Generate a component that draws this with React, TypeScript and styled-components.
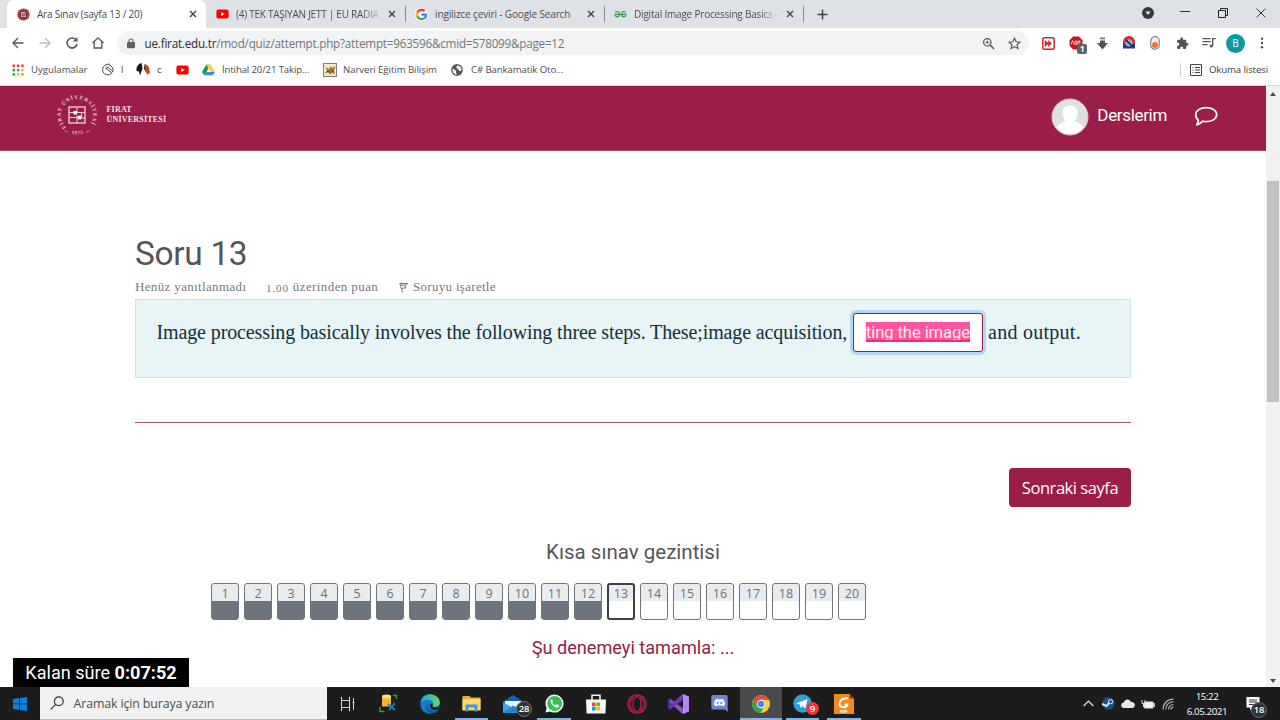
import React from "react";
import styled, { createGlobalStyle, css } from "styled-components";

const MAROON = "#9a1e47";
const UI = `"Open Sans", "Noto Sans", sans-serif`;
const SERIF = `"Liberation Serif", serif`;

const Global = createGlobalStyle`
  * { box-sizing: border-box; }
  body { margin: 0; background: #fff; overflow: hidden; }
  svg { display: block; flex: none; }
`;

const Screen = styled.div`
  width: 1280px; height: 720px; display: flex; flex-direction: column;
  font-family: ${UI}; overflow: hidden; background: #fff; white-space: nowrap;
`;

/* ---------- browser chrome ---------- */
const TabStrip = styled.div`
  height: 28px; flex: none; background: #dee1e6; display: flex; padding-left: 7px;
`;
const Tab = styled.div<{ $active?: boolean; $line?: boolean }>`
  width: 199px; height: 28px; padding: 0 3px 0 10px; display: flex; align-items: center;
  position: relative; color: #4b4e52;
  ${p => p.$active && css`background: #fff; border-radius: 7px 7px 0 0; color: #45484c;`}
  ${p => p.$line && css`&::after { content: ""; position: absolute; right: -1px; top: 6px; width: 1px; height: 16px; background: #85888c; }`}
`;
const Favicon = styled.span`
  width: 20px; flex: none; display: flex;
`;
const TabTitle = styled.span<{ $ls?: number; $fade?: boolean }>`
  width: 146px; overflow: hidden; font-size: 10px; line-height: 16px;
  letter-spacing: ${p => p.$ls ?? 0}px;
  ${p => p.$fade && css`mask-image: linear-gradient(90deg, #000 86%, transparent 100%);`}
`;
const TabClose = styled.span`
  flex: 1; display: flex; justify-content: center;
`;
const NewTab = styled.span`
  width: 38px; display: flex; align-items: center; justify-content: center;
`;
const WindowButtons = styled.div`
  margin-left: auto; display: flex; align-items: center; height: 26px;
`;
const WinSlot = styled.span<{ $w: number }>`
  width: ${p => p.$w}px; display: flex; justify-content: center;
`;
const Toolbar = styled.div`
  height: 31px; flex: none; display: flex; align-items: center; padding: 0 4px 1px 5px; background: #fff;
`;
const ToolSlot = styled.span`
  width: 26.65px; flex: none; display: flex; justify-content: center; position: relative;
`;
const Omnibox = styled.div`
  width: 912px; height: 24px; margin: 0 6.500px 0 5.500px; border-radius: 12px; background: #f1f3f4;
  display: flex; align-items: center; padding: 0 1px 0 10px;
`;
const Url = styled.span`
  flex: 1; margin-left: 9.500px; font-size: 11.7px; line-height: 16px; color: #72767a; letter-spacing: -0.23px;
  b { font-weight: 400; color: #2b2d30; }
`;
const ExtBadge = styled.span`
  position: absolute; left: 15px; top: 8px; width: 10px; height: 10px; border-radius: 2px;
  background: #5f6368; color: #fff; font: 700 8px/10px "Open Sans", sans-serif; text-align: center;
`;
const Avatar = styled.span`
  width: 19px; height: 19px; border-radius: 50%; background: #0d98a5; color: #fff;
  font-size: 10px; line-height: 19px; text-align: center;
`;
const BookmarkBar = styled.div`
  height: 27px; flex: none; display: flex; align-items: center; padding: 0 0 5px 12px;
  border-bottom: 1px solid #eccdd7; 
`;
const Bookmark = styled.span<{ $w: number; $gap?: number; $ls?: number }>`
  width: ${p => p.$w}px; flex: none; display: flex; align-items: center; gap: ${p => p.$gap ?? 7}px;
  font-size: 9.6px; line-height: 14px; letter-spacing: ${p => p.$ls ?? 0}px; color: #4b4e52;
`;
const ReadingList = styled.span`
  margin-left: auto; width: 100px; height: 14px; border-left: 1px solid #cfd1d4; padding-left: 9px;
  display: flex; align-items: center; gap: 7px; font-size: 9.6px; letter-spacing: -0.1px; color: #3c4043;
`;

/* ---------- page ---------- */
const Viewport = styled.div`
  flex: 1; min-height: 0; display: flex;
`;
const Page = styled.main`
  width: 1266px; position: relative; display: flex; flex-direction: column;
`;
const SiteHeader = styled.header`
  height: 65px; flex: none; background: ${MAROON}; border-bottom: 1px solid #a84e6c; display: flex;
  align-items: center; padding: 0 48px 6px 55px; color: #fff;
`;
const LogoText = styled.span`
  margin-left: 7.500px; font: 700 8px/9.6px ${SERIF}; color: #f6dfe6; letter-spacing: 0.2px;
`;
const UserMenu = styled.div`
  margin-left: auto; display: flex; align-items: center; padding-top: 3px;
`;
const UserName = styled.span`
  font: 400 17px/20px Roboto, sans-serif; margin: -3px 27px 0 8px; letter-spacing: -0.33px;
`;
const Content = styled.section`
  width: 996px; margin-left: 135px; display: flex; flex-direction: column;
`;
const QuestionTitle = styled.h1`
  margin: 82px 0 0; font: 400 33.500px/42px Roboto, sans-serif; color: #555; letter-spacing: -0.35px;
`;
const QuestionInfo = styled.div`
  height: 24px; padding-bottom: 3px; display: flex; align-items: flex-end; font: 400 13px/18px ${SERIF}; color: #74797e;
`;
const Info = styled.span<{ $w: number; $ls?: number }>`
  width: ${p => p.$w}px; letter-spacing: ${p => p.$ls ?? 0.3}px; display: flex; align-items: center;
`;
const SmallFigures = styled.span`
  font-size: 11px; line-height: 12px; margin: 1px 4px 0 0; letter-spacing: 0.9px;
`;
const Question = styled.div`
  height: 79px; background: #e7f5f7; border: 1px solid #cbe6e9; padding: 13px 0 0 20.5px;
  display: flex; align-items: flex-start; color: #12303a; font: 400 20px/38px ${SERIF};
`;
const Phrase = styled.span<{ $w: number; $ls: number }>`
  width: ${p => p.$w}px; letter-spacing: ${p => p.$ls}px;
`;
const Answer = styled.span`
  width: 130px; height: 39px; margin: 0 5px 0 0; border: 1px solid #8c1f45; border-radius: 3px; background: #fff;
  box-shadow: 0 0 0 3px #b5d6f5; padding: 8px 12px;
  font: 400 16.6px/20px Roboto, sans-serif; color: #ffe9f2;
`;
const Selected = styled.span`
  display: flex; justify-content: flex-end; width: 104px; height: 20px; overflow: hidden;
  background: #ff559c; border-bottom: 2px solid #f52d6a; line-height: 21px; letter-spacing: -0.08px;
`;
const Rule = styled.hr`
  width: 100%; margin: 44px 0 45px; border: 0; height: 1px; background: #a5596f;
`;
const NextButton = styled.button`
  align-self: flex-end; width: 122px; height: 39px; border: 0; border-radius: 4px; background: ${MAROON};
  color: #fff; font: 400 16.5px/39px ${UI}; padding: 0; letter-spacing: -0.45px;
`;
const NavTitle = styled.h2`
  margin: 32px 0 18px; font: 400 20.5px/26px Roboto, sans-serif; color: #555; text-align: center;
`;
const QuizNav = styled.div`
  display: flex; gap: 5px; margin-left: 76px;
`;
const NavCell = styled.span<{ $done?: boolean; $current?: boolean }>`
  width: 28px; height: 37px; border-radius: 3px; overflow: hidden; text-align: center;
  border: ${p => (p.$current ? "2px solid #3b4046" : "1px solid #6f757b")};
  font-size: 12.5px; line-height: ${p => (p.$current ? 17 : 19)}px; color: #6b7177;
  background: linear-gradient(#e9ecef ${p => (p.$current ? 16 : 17)}px, ${p => (p.$done ? "#6c757d" : "#fff")} 0);
`;
const FinishLink = styled.a`
  margin-top: 16px; font: 400 18.15px/24px Roboto, sans-serif; color: #8f2246; text-align: center;
`;
const Timer = styled.div`
  position: absolute; left: 13px; bottom: 0; width: 176px; height: 29px; background: #000; color: #fff;
  font: 400 18.1px/29px Roboto, sans-serif; text-align: center;
  b { font-weight: 700; }
`;
const ScrollBar = styled.div`
  width: 14px; background: #f1f1f1; display: flex; flex-direction: column; align-items: center;
  padding: 6px 0 4px;
`;
const ScrollThumb = styled.div`
  width: 12px; height: 221px; background: #c1c1c1; margin: 85px 0 auto;
`;

/* ---------- taskbar ---------- */
const Taskbar = styled.footer`
  height: 33px; flex: none; background: #1c1c1c; display: flex; color: #fff;
`;
const Start = styled.span`
  width: 40px; display: flex; align-items: center; justify-content: center;
`;
const SearchBox = styled.div`
  width: 286.500px; height: 33px; background: #f1f1f1; border-bottom: 1px solid #b9b9b9; display: flex; align-items: center;
  padding-left: 10px; gap: 9.500px; color: #4d4d4d; font-size: 12.4px; letter-spacing: -0.13px;
`;
const TaskItem = styled.span<{ $open?: boolean; $active?: boolean }>`
  width: 41.4px; height: 33px; display: flex; align-items: center; justify-content: center; position: relative;
  background: ${p => (p.$active ? "#4a4a4a" : "transparent")};
  ${p => p.$open && css`&::after { content: ""; position: absolute; bottom: 0; height: 2px;
    left: ${p.$active ? 0 : 4}px; right: ${p.$active ? 0 : 4}px; background: #7ab8ec; }`}
`;
const CountBadge = styled.span<{ $red?: boolean; $left?: number; $top?: number }>`
  position: absolute; left: ${p => p.$left ?? 24}px; top: ${p => p.$top ?? 14}px;
  width: ${p => (p.$red ? 13 : 16)}px; height: ${p => (p.$red ? 13 : 16)}px;
  border-radius: 50%; background: ${p => (p.$red ? "#e83b40" : "#303438")};
  border: ${p => (p.$red ? 0 : 1)}px solid #6a6e70;
  font: 600 9.500px/13px "Open Sans", sans-serif; letter-spacing: -0.2px; display: flex; justify-content: center;
`;
const Tray = styled.div`
  margin-left: auto; display: flex; align-items: center;
`;
const TraySlot = styled.span<{ $w: number }>`
  width: ${p => p.$w}px; display: flex; justify-content: center; position: relative;
`;
const Clock = styled.div`
  width: 54px; text-align: center; font-size: 9.8px; line-height: 15px; letter-spacing: -0.45px; margin-right: 12px;
`;

/* ---------- icons ---------- */
const Close = () => (
  <svg width="8" height="8" viewBox="0 0 8 8" stroke="#3f4246" strokeWidth="1.4"><path d="M1 1l6 6M7 1l-6 6" /></svg>
);
const YouTube = () => (
  <svg width="13" height="12" viewBox="0 0 13 12"><rect x="0.4" y="1.4" width="12.2" height="9.2" rx="2.2" fill="#f00" /><path d="M5.2 4v4l3.4-2z" fill="#fff" /></svg>
);
const FiratIcon = () => (
  <svg width="13" height="13" viewBox="0 0 13 13"><circle cx="6.5" cy="6.5" r="6.1" fill="#8c2631" /><circle cx="6.5" cy="6.5" r="4.8" fill="none" stroke="#d4a4a8" strokeWidth=".8" strokeDasharray="1 .6" /><rect x="4.1" y="4.1" width="4.8" height="4.8" fill="#e8caca" /><path d="M5 5.8h2.2v2H5.4zM8.2 4.4v3" stroke="#8c2631" fill="none" strokeWidth=".8" /></svg>
);
const GoogleG = () => (
  <svg width="13" height="13" viewBox="0 0 48 48">
    <rect width="48" height="48" rx="20" fill="#f6f7f8" />
    <path fill="#EA4335" d="M24 11c3.300 0 6.200 1.100 8.500 3.300l6-6C34.700 4.700 29.900 3 24 3 15.800 3 8.700 7.700 5.200 14.500l7 5.400C13.800 14.700 18.500 11 24 11z" />
    <path fill="#4285F4" d="M45 24.500c0-1.500-.1-2.700-.4-4H24v8h12c-.5 3-2.200 5.200-4.800 6.900l6.800 5.300c4.300-4 7-9.600 7-16.200z" />
    <path fill="#FBBC05" d="M12.200 28.200c-.5-1.300-.7-2.700-.7-4.200s.2-2.900.7-4.200l-7-5.300C3.800 17.400 3 20.600 3 24s.8 6.600 2.200 9.500z" />
    <path fill="#34A853" d="M24 45c5.700 0 10.500-1.800 14-5l-6.800-5.200c-1.900 1.300-4.300 2-7.200 2-5.500 0-10.200-3.700-11.800-8.700l-7 5.400C8.700 40.400 15.800 45 24 45z" />
  </svg>
);
const Geeks = () => (
  <svg width="13" height="12" viewBox="0 0 13 12" fill="none" stroke="#3fa45b" strokeWidth="1.300"><path d="M.6 6.400h11.800M1.200 4.300C2.400 3.200 5.600 3 5.600 6.300 5.600 9.600 1.300 9.500 1 6.500M11.800 4.300C10.600 3.200 7.400 3 7.400 6.300c0 3.300 4.300 3.200 4.600.2" /></svg>
);
const Apps = () => (
  <svg width="12" height="12" viewBox="0 0 12 12">
    {["#e8453c", "#e8453c", "#e8453c", "#34a853", "#4285f4", "#fbbc05", "#34a853", "#fbbc05", "#f0a020"].map((c, i) => (
      <rect key={i} x={0.5 + (i % 3) * 4.3} y={0.5 + Math.floor(i / 3) * 4.3} width="2.600" height="2.600" fill={c} />
    ))}
  </svg>
);
const Lichess = () => (
  <svg width="13" height="13" viewBox="0 0 13 13" fill="none" stroke="#404346" strokeWidth="1"><path d="M10.400 10.400A5.200 5.200 0 1 1 6.500 1.500L8 .8l.4 1.400C11 3 12.500 5.500 12 8l-1.400 1.800L4.700 5.200M4.700 5.200L7.600 4.400l3.200 3.200" /></svg>
);
const Heads = () => (
  <svg width="14" height="13" viewBox="0 0 14 13"><path d="M5.500 0C2 1 0 4 .6 8L3 8.500 4 12.500 5.200 9 6.500 5z" fill="#171717" /><path d="M8.500 1c3 .5 5 3 5 6.500L14 11l-2-1-.5 2.500L9.500 8z" fill="#c8481c" /><path d="M8.300 1L8 6l2.200 3z" fill="#3a1c12" /></svg>
);
const Drive = () => (
  <svg width="13" height="12" viewBox="0 0 13 12"><path d="M4.400.8h4.200L4.300 8 2.200 11.300 0 7.900z" fill="#0f9d58" /><path d="M4.400.8h4.200L13 7.900H8.700z" fill="#ffcd40" /><path d="M4.300 7.900H13l-2.200 3.400H2.200z" fill="#4285f4" /></svg>
);
const Narveri = () => (
  <svg width="14" height="14" viewBox="0 0 14 14"><rect x=".5" y=".5" width="13" height="13" fill="#f3ead2" stroke="#7d7d7d" /><path d="M1.500 10.500L4 7.500 2.500 4 6 6l2-3 1 2 3.500-2-1.500 5 1 3-3-1-2 1.500-2-2z" fill="#a37a2c" /><path d="M8 7l3 2M4 8l3 1" stroke="#584014" /></svg>
);
const Globe = () => (
  <svg width="12" height="12" viewBox="0 0 12 12"><circle cx="6" cy="6" r="5.900" fill="#55585c" /><path d="M1.500 4.500L5 6.500v2.200L6 10.500C3 10.800 1 8 1.500 4.500zM6.500 1.500L5 3.300 6.600 4.700l1.700 2 2 .3c1-2.500-.8-5.200-3.800-5.500z" fill="#eef0f1" /></svg>
);
const Ic = ({ children, w = 14, sw = 1.3, c = "#515559" }: { children: React.ReactNode; w?: number; sw?: number; c?: string }) => (
  <svg width={w} height={w} viewBox="0 0 14 14" fill="none" stroke={c} strokeWidth={sw}>{children}</svg>
);

const CrestText = () => (
  <svg width="44" height="44" viewBox="0 0 44 44" fill="none">
    <defs>
      <path id="ring" d="M11.300 34.200A16.200 16.200 0 1 1 32.700 34.200" />
      <path id="ringLow" d="M13 39.300A19.500 19.500 0 0 0 31 39.300" />
    </defs>
    <g fill="#ecc7d3" fontFamily="Liberation Serif, serif" fontWeight="700" fontSize="5.500">
      <text><textPath href="#ring" textLength="73">FIRAT ÜNİVERSİTESİ</textPath></text>
      <text fontSize="5"><textPath href="#ringLow" startOffset="3.500" textLength="12">1975</textPath></text>
    </g>
    <path d="M9 37.300l4 2M35 37.300l-4 2" stroke="#cf93a8" strokeWidth=".8" />
    <rect x="14" y="14" width="16" height="16" stroke="#f7e3e9" strokeWidth="1.200" />
    <path d="M14 19.500h8M22 14v5.500M22 22.500v7.500M14 24.500h8M22 19.500h8M26.500 19.500V25H30" stroke="#f0ccd8" strokeWidth="1" />
    <rect x="18.500" y="18" width="3.500" height="3.500" fill="#fff" /><rect x="22.700" y="22.700" width="3.700" height="3.700" fill="#fff" />
  </svg>
);
const Person = () => (
  <svg width="38" height="38" viewBox="0 0 38 38">
    <defs><clipPath id="face"><circle cx="19" cy="19" r="17" /></clipPath></defs>
    <circle cx="19" cy="19" r="18" fill="#e0e0e0" stroke="#e3c3ce" strokeWidth="1" />
    <g clipPath="url(#face)" fill="#fff"><path d="M19 7.500c5 0 8 3.300 7.600 8-.3 3.600-1.700 5.500-2.700 7 .3 2.500 6 1.500 8.300 7L30 38H8L5.800 29.500c2.300-5.500 8-4.500 8.300-7-1-1.500-2.400-3.400-2.700-7C11 10.800 14 7.500 19 7.500z" /></g>
  </svg>
);
const Bubble = () => (
  <svg width="24" height="21" viewBox="0 0 24 21" fill="none" stroke="#fff" strokeWidth="1.700" strokeLinejoin="round"><path d="M12.300 1.600c6 0 10.400 3 10.400 7s-4.400 7-10.400 7c-1.300 0-2.500-.1-3.500-.4-1.800 1.900-3.600 3.300-6 3.600 1.300-1.400 1.700-3.100 1.500-4.600C2.600 12.900 1.700 10.900 1.700 8.600c0-4 4.600-7 10.600-7z" /></svg>
);

const TabClosing = () => <TabClose><Close /></TabClose>;

export default function App() {
  return (
    <Screen>
      <Global />
      <TabStrip>
        <Tab $active><Favicon><FiratIcon /></Favicon><TabTitle $ls={-0.2}>Ara Sınav (sayfa 13 / 20)</TabTitle><TabClosing /></Tab>
        <Tab $line><Favicon><YouTube /></Favicon><TabTitle $fade $ls={-0.25}>(4) TEK TAŞIYAN JETT | EU RADIA</TabTitle><TabClosing /></Tab>
        <Tab $line><Favicon><GoogleG /></Favicon><TabTitle $ls={-0.13}>ingilizce çeviri - Google Search</TabTitle><TabClosing /></Tab>
        <Tab $line><Favicon><Geeks /></Favicon><TabTitle $fade $ls={-0.2}>Digital Image Processing Basics -</TabTitle><TabClosing /></Tab>
        <NewTab><svg width="11" height="11" viewBox="0 0 11 11" stroke="#3c4043" strokeWidth="1.500"><path d="M5.500.5v10M.5 5.500h10" /></svg></NewTab>
        <WindowButtons>
          <WinSlot $w={37}><svg width="12" height="12" viewBox="0 0 12 12"><circle cx="6" cy="6" r="6" fill="#35383c" /><path d="M3.500 4.500h5L6 8z" fill="#e8eaed" /></svg></WinSlot>
          <WinSlot $w={38}><svg width="10" height="12"><path d="M0 4.500h10" stroke="#333" /></svg></WinSlot>
          <WinSlot $w={38}><svg width="10" height="10" fill="none" stroke="#222"><path d="M.5 2.500h7v7h-7zM2.500 2.500v-2h7v7h-2" /></svg></WinSlot>
          <WinSlot $w={38}><svg width="10" height="10" stroke="#333"><path d="M.7.7l8.600 8.600M9.300.7L.7 9.300" /></svg></WinSlot>
        </WindowButtons>
      </TabStrip>
      <Toolbar>
        <ToolSlot><Ic><path d="M12.500 7H2M7 2L2 7l5 5" /></Ic></ToolSlot>
        <ToolSlot><Ic c="#bcbec1"><path d="M1.500 7H12M7 2l5 5-5 5" /></Ic></ToolSlot>
        <ToolSlot><Ic sw={1.5}><path d="M11.300 4.300A5 5 0 1 0 12 8" /><path d="M12.500 1v4.500H8z" fill="#515559" stroke="none" /></Ic></ToolSlot>
        <ToolSlot><Ic><path d="M1.500 7L7 1.800 12.500 7M3.200 6v6h7.600V6" /></Ic></ToolSlot>
        <Omnibox>
          <svg width="8" height="11" viewBox="0 0 8 11"><rect y="4" width="8" height="6.300" rx="1" fill="#5f6368" /><path d="M2 4.500V3a2 2 0 0 1 4 0v1.500" fill="none" stroke="#5f6368" strokeWidth="1.100" /></svg>
          <Url><b>ue.firat.edu.tr</b>/mod/quiz/attempt.php?attempt=963596&amp;cmid=578099&amp;page=12</Url>
          <ToolSlot><Ic w={13}><circle cx="5.700" cy="5.700" r="4" /><path d="M8.600 8.600L13 13" strokeWidth="1.600" /><path d="M5.700 3.800v3.800M3.800 5.700h3.800" strokeWidth=".9" /></Ic></ToolSlot>
          <ToolSlot><Ic sw={1.2} w={13}><path d="M7 1.200l1.700 3.900 4.200.4-3.200 2.800 1 4.200L7 10.300l-3.700 2.200 1-4.200L1.100 5.500l4.200-.4z" /></Ic></ToolSlot>
        </Omnibox>
        <ToolSlot><svg width="13" height="13" viewBox="0 0 13 13"><rect x=".8" y=".8" width="11.400" height="11.400" rx="2" fill="#fff" stroke="#c9252b" strokeWidth="1.500" /><path d="M3 3.500L6.500 6.500 3 9.500zM6.300 3.500l3.200 3-3.200 3z" fill="#c9252b" stroke="#c9252b" strokeWidth=".5" /></svg></ToolSlot>
        <ToolSlot>
          <svg width="14" height="14" viewBox="0 0 14 14"><path d="M4.200.5h5.600l3.700 3.700v5.600l-3.700 3.700H4.200L.5 9.800V4.200z" fill="#c4161c" /><path d="M2 8.500l1.500-4 1.500 4M6 8.500V5h1.800v3.500zM9 8.500V5h2v1.800H9" stroke="#f5c9ca" fill="none" strokeWidth=".9" /></svg>
          <ExtBadge>1</ExtBadge>
        </ToolSlot>
        <ToolSlot><svg width="11" height="13" viewBox="0 0 11 13"><path d="M3 3.500h5V6h3L5.500 12.500 0 6h3z" fill="#505356" /><path d="M3 .5h5v1.800H3z" fill="#777" /></svg></ToolSlot>
        <ToolSlot><svg width="14" height="14" viewBox="0 0 14 14"><path d="M1 9V6a6 6 0 0 1 12 0v3z" fill="#d42a2e" /><path d="M1 8h12v4.500H1z" fill="#283b78" /><circle cx="7" cy="6.800" r="3.600" fill="#8db3dd" /><path d="M4 4l6.500 6.500" stroke="#1b2448" strokeWidth="1.700" /></svg></ToolSlot>
        <ToolSlot><svg width="10" height="14" viewBox="0 0 10 14"><rect x=".7" y=".7" width="8.600" height="12.600" rx="4.300" fill="#eee" stroke="#85888b" strokeWidth="1.200" /><circle cx="5" cy="9" r="2.900" fill="#f0712c" /></svg></ToolSlot>
        <ToolSlot><svg width="13" height="13" viewBox="0 0 24 24"><path fill="#505458" d="M20.500 11H19V7c0-1.100-.9-2-2-2h-4V3.500a2.500 2.500 0 0 0-5 0V5H4c-1.100 0-2 .9-2 2v3.800h1.500a2.700 2.700 0 0 1 0 5.400H2V20c0 1.100.9 2 2 2h3.800v-1.500a2.700 2.700 0 0 1 5.400 0V22H17c1.100 0 2-.9 2-2v-4h1.500a2.500 2.500 0 0 0 0-5z" /></svg></ToolSlot>
        <ToolSlot><svg width="14" height="12" viewBox="0 0 14 12" stroke="#505458" fill="none" strokeWidth="1.300"><path d="M.5 1.700h8M.5 4.700h8M.5 7.700h5M10.700 9V1.700h3" /><circle cx="9.200" cy="9" r="1.500" fill="#505458" stroke="none" /></svg></ToolSlot>
        <ToolSlot><Avatar>B</Avatar></ToolSlot>
        <ToolSlot><svg width="4" height="12" fill="#505458"><circle cx="2" cy="1.700" r="1.200" /><circle cx="2" cy="6" r="1.200" /><circle cx="2" cy="10.300" r="1.200" /></svg></ToolSlot>
      </Toolbar>
      <BookmarkBar>
        <Bookmark $w={89}><Apps />Uygulamalar</Bookmark>
        <Bookmark $w={35}><Lichess />l</Bookmark>
        <Bookmark $w={40}><Heads />c</Bookmark>
        <Bookmark $w={26}><YouTube /></Bookmark>
        <Bookmark $w={121} $ls={-0.13}><Drive />İntihal 20/21 Takip...</Bookmark>
        <Bookmark $w={128} $gap={6} $ls={-0.05}><Narveri />Narveri Eğitim Bilişim</Bookmark>
        <Bookmark $w={140} $gap={8} $ls={-0.1}><Globe />C# Bankamatik Oto...</Bookmark>
        <ReadingList><svg width="12" height="12" fill="none" stroke="#3f4347"><path d="M.5.5h11v11H.5z" /><path d="M2.500 3.500h1M5 3.500h5M2.500 6h1M5 6h5M2.500 8.500h1M5 8.500h5" /></svg>Okuma listesi</ReadingList>
      </BookmarkBar>

      <Viewport>
        <Page>
          <SiteHeader>
            <CrestText />
            <LogoText>FIRAT<br />ÜNİVERSİTESİ</LogoText>
            <UserMenu><Person /><UserName>Derslerim</UserName><Bubble /></UserMenu>
          </SiteHeader>
          <Content>
            <QuestionTitle>Soru 13</QuestionTitle>
            <QuestionInfo>
              <Info $w={131} $ls={0.35}>Henüz yanıtlanmadı</Info>
              <Info $w={133} $ls={0.4}><SmallFigures>1.00</SmallFigures>üzerinden puan</Info>
              <Info $w={120}><svg width="10" height="11" viewBox="0 0 10 11" fill="none" stroke="#6e7479" strokeWidth="1" style={{ marginRight: 4 }}><path d="M.8 1.500L3.600 10.500M.8 1.500h8L6 3.500l1 2.200-4.200.8M2 3l4 .4" /></svg>Soruyu işaretle</Info>
            </QuestionInfo>
            <Question>
              <Phrase $w={696.5} $ls={-0.12}>Image processing basically involves the following three steps. These;image acquisition,</Phrase>
              <Answer><Selected>ting the image</Selected></Answer>
              <Phrase $w={100} $ls={0.27}>and output.</Phrase>
            </Question>
            <Rule />
            <NextButton>Sonraki sayfa</NextButton>
            <NavTitle>Kısa sınav gezintisi</NavTitle>
            <QuizNav>
              {Array.from({ length: 20 }, (_, i) => (
                <NavCell key={i} $done={i < 12} $current={i === 12}>{i + 1}</NavCell>
              ))}
            </QuizNav>
            <FinishLink>Şu denemeyi tamamla: ...</FinishLink>
          </Content>
          <Timer>Kalan süre <b>0:07:52</b></Timer>
        </Page>
        <ScrollBar>
          <svg width="6" height="4"><path d="M0 4l3-4 3 4z" fill="#4d4d4d" /></svg>
          <ScrollThumb />
          <svg width="6" height="4"><path d="M0 0l3 4 3-4z" fill="#4d4d4d" /></svg>
        </ScrollBar>
      </Viewport>

      <Taskbar>
        <Start><svg width="14" height="14" viewBox="0 0 14 14" fill="#0f7fdc"><path d="M0 2l6-.9v5.500H0zM6.700 1L14 0v6.600H6.700zM0 7.300h6v5.500L0 12zM6.700 7.300H14V14l-7.300-1z" /></svg></Start>
        <SearchBox><svg width="14" height="14" viewBox="0 0 14 14" fill="none" stroke="#333" strokeWidth="1.200"><circle cx="8.800" cy="5.200" r="4.400" /><path d="M5.700 8.300L.7 13.300" /></svg>Aramak için buraya yazın</SearchBox>
        <TaskItem><svg width="15" height="14" viewBox="0 0 15 14" fill="none" stroke="#d5d5d5"><path d="M1.500 0v3M9.500 0v3M1 3.500h9M1.500 4v6M9.500 4v6M1 10.500h9M1.500 11v3M9.500 11v3M13.500 1v12M12.500 5.500h2" /></svg></TaskItem>
        <TaskItem><svg width="19" height="19" viewBox="0 0 19 19"><path d="M3 2.500h9v10H3z" fill="#f6b62c" /><ellipse cx="7.500" cy="2.500" rx="4.500" ry="1.900" fill="#ffe07a" /><path d="M14 1.500h3.500V5M1 13v4.500h4.500" fill="none" stroke="#3f9a48" strokeWidth="1.400" /><path d="M9 10l7 6M16 9l-6 7" stroke="#1e82d2" strokeWidth="1.800" /></svg></TaskItem>
        <TaskItem><svg width="20" height="20" viewBox="0 0 20 20"><defs><linearGradient id="ed" x1="0" x2="1"><stop stopColor="#1c9fd8" /><stop offset="1" stopColor="#5cd96c" /></linearGradient></defs><circle cx="10" cy="10" r="9.800" fill="#1678cf" /><path d="M.4 8.500C1 3.500 5 .2 10 .2c5.500 0 9.800 3.800 9.800 8 0 3.300-2.600 5-5.300 5-2 0-2.700-.9-1.800-2C14 8.500 12 6 8.500 6 5 6 1.500 7.500.4 8.500z" fill="url(#ed)" /><path d="M9 8c-3 3-1.500 8.500 4 9.300 2 .2 4-.6 5.500-1.500-1 1.700-2.500 2.900-4.500 3.600C6.500 19.500 4 13 9 8z" fill="#124f96" /><path d="M12.700 11c-1 1.300-.1 2.200 1.800 2.200 1.500 0 3.200-.5 4.200-1.500l-.8 3.600c-3 1.500-8 .5-8-3.300 0-2.500 3.500-3 2.800-1z" fill="#1c1c1c" /></svg></TaskItem>
        <TaskItem $open><svg width="19" height="17" viewBox="0 0 19 17"><path d="M.5 1h7l1.500 1.500h9.500V15H.5z" fill="#e7ac35" /><path d="M.5 4h18v11.500H.5z" fill="#fcd671" /><path d="M3.500 16.500V9.500h12v7h-3v-4h-6v4z" fill="#4697d6" /></svg></TaskItem>
        <TaskItem><svg width="20" height="18" viewBox="0 0 20 18"><path d="M0 6.500L10 0l10 6.500V18H0z" fill="#0f62b0" /><path d="M2 6h16v7H2z" fill="#eef5fb" /><path d="M0 7l10 6 10-6v11H0z" fill="#36a6ee" /><path d="M0 18l10-7.500L20 18z" fill="#1e88dc" /></svg><CountBadge>28</CountBadge></TaskItem>
        <TaskItem $open><svg width="19" height="19" viewBox="0 0 19 19"><path d="M.5 18.500l1.200-4.400A9 9 0 1 1 5 17.400z" fill="#fff" /><circle cx="9.600" cy="9.400" r="7.500" fill="#35c250" /><path d="M6.500 5c-2 1.500-.7 4.200 1.300 6.200s5 3.400 6 1.200c.6-1.200-.2-1.400-1.900-2.200-.8-.3-1 1.200-1.600 1-1.600-.7-2.400-1.500-3-2.700-.3-.6.900-.8.600-1.500C7.400 5.500 7.200 4.700 6.500 5z" fill="#fff" /></svg></TaskItem>
        <TaskItem><svg width="20" height="20" viewBox="0 0 20 20"><path d="M6 6V1.200h8V6" fill="none" stroke="#f2f2f2" strokeWidth="1.600" /><path d="M0 5.500h20l-.6 14H.6z" fill="#f7f7f7" /><path d="M6 8.500h3.700v3.700H6z" fill="#ee5021" /><path d="M10.300 8.500H14v3.700h-3.700z" fill="#7db700" /><path d="M6 12.800h3.700v3.700H6z" fill="#03a0ea" /><path d="M10.300 12.800H14v3.700h-3.700z" fill="#fdb602" /></svg></TaskItem>
        <TaskItem><svg width="20" height="20" viewBox="0 0 20 20" fill="none" stroke="#c61f45" strokeWidth="1.200"><circle cx="10" cy="10" r="9.200" /><ellipse cx="10" cy="10" rx="4" ry="7.700" /><path d="M7 3c-5.500 3-5.500 11 0 14M13 3c5.500 3 5.500 11 0 14" /></svg></TaskItem>
        <TaskItem><svg width="21" height="20" viewBox="0 0 21 20"><path d="M0 6l2-1.500L16 15v4.500L14.500 20 0 7z" fill="#8453c8" /><path d="M0 14l2 1.500L16 5V.5L14.500 0 0 13z" fill="#6b3bb0" /><path d="M0 6l2-1v10l-2-1z" fill="#5c2fa0" /><path d="M15 0l6 2.500v15L15 20z" fill="#b288f5" /></svg></TaskItem>
        <TaskItem><svg width="17" height="17" viewBox="0 0 17 17"><path d="M2 0h13a1.700 1.700 0 0 1 1.700 1.700V17l-3-2.600H2A1.700 1.700 0 0 1 .3 12.700v-11A1.700 1.700 0 0 1 2 0z" fill="#6e85d3" /><path d="M4.500 4.500C6 3.700 7 3.800 7 3.800l.5.600h2l.5-.6s1 0 2.500.7C13.700 6.500 14 8.500 13.900 10c-1 1-2.600 1.200-2.600 1.200l-.7-1c-1 .3-3.200.3-4.200 0l-.7 1s-1.600-.2-2.600-1.200C3 8.500 3.300 6.500 4.500 4.500z" fill="#fff" /><circle cx="6.700" cy="7.900" r="1.100" fill="#6e85d3" /><circle cx="10.300" cy="7.900" r="1.100" fill="#6e85d3" /></svg></TaskItem>
        <TaskItem $open $active><svg width="18" height="18" viewBox="0 0 18 18"><circle cx="9" cy="9" r="9" fill="#f9cf3a" /><path d="M1.200 4.500A9 9 0 0 1 16.800 4.800L9 4.800 5 11z" fill="#e24a3b" /><path d="M1.200 4.500L5.300 11.200 9 13.200h2.500L8.500 18A9 9 0 0 1 1.200 4.500z" fill="#35a150" /><circle cx="9" cy="9" r="4.200" fill="#fff" /><circle cx="9" cy="9" r="3.300" fill="#4587ee" /></svg></TaskItem>
        <TaskItem $open><svg width="19" height="19" viewBox="0 0 19 19"><circle cx="9.500" cy="9.500" r="9.200" fill="#2ca0dc" /><path d="M3.500 9.300L14.500 5l-2 9.500-3.300-2.400-1.700 1.800-.4-3z" fill="#fff" /></svg><CountBadge $red $top={15}>9</CountBadge></TaskItem>
        <TaskItem $open><svg width="20" height="20" viewBox="0 0 20 20"><path d="M0 0h15.500L20 4.500V20H0z" fill="#f48b1f" /><path d="M15.500 0v4.500H20z" fill="#7b4410" /><path d="M14.200 4.400C8.500 3.800 5.500 6.800 5.500 9.500c0 4.600 6.800 5.300 8 1H10.500" fill="none" stroke="#fff" strokeWidth="2" /><text x="6" y="18.700" fontSize="4" fontWeight="700" fontFamily="Roboto, sans-serif" fill="#fff">PDF</text></svg></TaskItem>
        <Tray>
          <TraySlot $w={20}><svg width="11" height="7" fill="none" stroke="#e5e5e5" strokeWidth="1.200"><path d="M.6 6L5.500 1l4.900 5" /></svg></TraySlot>
          <TraySlot $w={20}><svg width="13" height="13" viewBox="0 0 13 13"><circle cx="6.500" cy="6.500" r="6.300" fill="#16508e" /><path d="M0 7l4.500 2L7 6.300l.5-2.800" stroke="#dfe9f3" fill="none" strokeWidth="2" /><circle cx="8.600" cy="4.700" r="2.100" fill="#16508e" stroke="#e6eef6" strokeWidth="1" /></svg></TraySlot>
          <TraySlot $w={20}><svg width="14" height="9" viewBox="0 0 14 9"><path d="M3 9a2.700 2.700 0 0 1 0-5.500C3.500 0 8.500-.8 10 3c5-.5 5 6 1 6z" fill="#e6e6e6" /></svg></TraySlot>
          <TraySlot $w={20}><svg width="14" height="10" viewBox="0 0 14 10"><path d="M3.500 3h8.500v6H3.500z" fill="#f2f2f2" stroke="#ddd" /><path d="M12.700 4.500h1v3h-1zM1 1v3.500h3V1M2.500 4.500V8" fill="none" stroke="#ddd" /></svg></TraySlot>
          <TraySlot $w={20}><svg width="12" height="12" viewBox="0 0 12 12" fill="none" stroke="#bdbdbd" strokeWidth="1.100"><path d="M1 11.500C1 5.500 5.500 1 11.500 1M3.800 11.500c0-4.500 3.200-7.700 7.700-7.700M6.500 11.500c0-3 2-5 5-5M9 11.500c0-1.500 1-2.500 2.500-2.500" /></svg></TraySlot>
          <TraySlot $w={2} />
          <Clock>15:22<br />6.05.2021</Clock>
          <TraySlot $w={30}><svg width="14" height="14" viewBox="0 0 13 14" style={{ marginRight: 17 }}><path d="M0 0h13v10.500H6L3.500 13.500v-3H0z" fill="#fff" /><path d="M2.500 3h8M2.500 5h8M2.500 7.500h5" stroke="#333" /></svg>
            <CountBadge $left={5} $top={5}>18</CountBadge></TraySlot>
          <TraySlot $w={4} />
        </Tray>
      </Taskbar>
    </Screen>
  );
}
